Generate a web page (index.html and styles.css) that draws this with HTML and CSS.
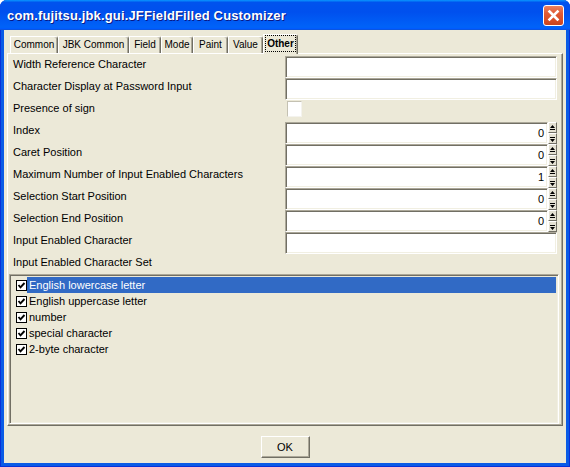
FILE: index.html
```html
<!DOCTYPE html>
<html>
<head>
<meta charset="utf-8">
<link rel="stylesheet" href="styles.css">
</head>
<body>
<div class="window">
  <div class="titlebar">
    <span class="title">com.fujitsu.jbk.gui.JFFieldFilled Customizer</span>
    <div class="close">
      <svg width="19" height="19" viewBox="0 0 19 19"><path d="M5.5 5.5 L13.5 13.5 M13.5 5.5 L5.5 13.5" stroke="#fff" stroke-width="2.6" stroke-linecap="square"/></svg>
    </div>
  </div>
  <div class="client">
    <div class="tabs">
      <div class="tab">Common</div>
      <div class="tab">JBK Common</div>
      <div class="tab">Field</div>
      <div class="tab">Mode</div>
      <div class="tab">Paint</div>
      <div class="tab">Value</div>
      <div class="tab active"><span class="focus">Other</span></div>
    </div>
    <div class="panel">
      <div class="form">
        <span class="label">Width Reference Character</span>
        <div class="field"></div>
        <span class="label">Character Display at Password Input</span>
        <div class="field"></div>
        <span class="label">Presence of sign</span>
        <div class="cell"><span class="check"></span></div>
        <span class="label">Index</span>
        <div class="spinfield"><div class="field num">0</div><div class="spinner"><span class="spin-btn"><svg width="5" height="6" viewBox="0 0 5 6"><path d="M2.5 0 L5 3 L0 3 Z M0 4 H5 V5 H0 Z" fill="#000"/></svg></span><span class="spin-btn"><svg width="5" height="6" viewBox="0 0 5 6"><path d="M0 1 H5 V2 H0 Z M0 3 L5 3 L2.5 6 Z" fill="#000"/></svg></span></div></div>
        <span class="label">Caret Position</span>
        <div class="spinfield"><div class="field num">0</div><div class="spinner"><span class="spin-btn"><svg width="5" height="6" viewBox="0 0 5 6"><path d="M2.5 0 L5 3 L0 3 Z M0 4 H5 V5 H0 Z" fill="#000"/></svg></span><span class="spin-btn"><svg width="5" height="6" viewBox="0 0 5 6"><path d="M0 1 H5 V2 H0 Z M0 3 L5 3 L2.5 6 Z" fill="#000"/></svg></span></div></div>
        <span class="label">Maximum Number of Input Enabled Characters</span>
        <div class="spinfield"><div class="field num">1</div><div class="spinner"><span class="spin-btn"><svg width="5" height="6" viewBox="0 0 5 6"><path d="M2.5 0 L5 3 L0 3 Z M0 4 H5 V5 H0 Z" fill="#000"/></svg></span><span class="spin-btn"><svg width="5" height="6" viewBox="0 0 5 6"><path d="M0 1 H5 V2 H0 Z M0 3 L5 3 L2.5 6 Z" fill="#000"/></svg></span></div></div>
        <span class="label">Selection Start Position</span>
        <div class="spinfield"><div class="field num">0</div><div class="spinner"><span class="spin-btn"><svg width="5" height="6" viewBox="0 0 5 6"><path d="M2.5 0 L5 3 L0 3 Z M0 4 H5 V5 H0 Z" fill="#000"/></svg></span><span class="spin-btn"><svg width="5" height="6" viewBox="0 0 5 6"><path d="M0 1 H5 V2 H0 Z M0 3 L5 3 L2.5 6 Z" fill="#000"/></svg></span></div></div>
        <span class="label">Selection End Position</span>
        <div class="spinfield"><div class="field num">0</div><div class="spinner"><span class="spin-btn"><svg width="5" height="6" viewBox="0 0 5 6"><path d="M2.5 0 L5 3 L0 3 Z M0 4 H5 V5 H0 Z" fill="#000"/></svg></span><span class="spin-btn"><svg width="5" height="6" viewBox="0 0 5 6"><path d="M0 1 H5 V2 H0 Z M0 3 L5 3 L2.5 6 Z" fill="#000"/></svg></span></div></div>
        <span class="label">Input Enabled Character</span>
        <div class="field"></div>
        <span class="label wide">Input Enabled Character Set</span>
      </div>
      <div class="list">
        <div class="item selected"><svg class="cb" width="11" height="11" viewBox="0 0 11 11"><rect x="0.5" y="0.5" width="10" height="10" fill="#fff" stroke="#000"/><polyline points="2.5,5 4.5,7.3 8.5,3" fill="none" stroke="#000" stroke-width="1.9"/></svg><span class="text">English lowercase letter</span></div>
        <div class="item"><svg class="cb" width="11" height="11" viewBox="0 0 11 11"><rect x="0.5" y="0.5" width="10" height="10" fill="#fff" stroke="#000"/><polyline points="2.5,5 4.5,7.3 8.5,3" fill="none" stroke="#000" stroke-width="1.9"/></svg><span class="text">English uppercase letter</span></div>
        <div class="item"><svg class="cb" width="11" height="11" viewBox="0 0 11 11"><rect x="0.5" y="0.5" width="10" height="10" fill="#fff" stroke="#000"/><polyline points="2.5,5 4.5,7.3 8.5,3" fill="none" stroke="#000" stroke-width="1.9"/></svg><span class="text">number</span></div>
        <div class="item"><svg class="cb" width="11" height="11" viewBox="0 0 11 11"><rect x="0.5" y="0.5" width="10" height="10" fill="#fff" stroke="#000"/><polyline points="2.5,5 4.5,7.3 8.5,3" fill="none" stroke="#000" stroke-width="1.9"/></svg><span class="text">special character</span></div>
        <div class="item"><svg class="cb" width="11" height="11" viewBox="0 0 11 11"><rect x="0.5" y="0.5" width="10" height="10" fill="#fff" stroke="#000"/><polyline points="2.5,5 4.5,7.3 8.5,3" fill="none" stroke="#000" stroke-width="1.9"/></svg><span class="text">2-byte character</span></div>
      </div>
    </div>
    <div class="actions">
      <button class="ok">OK</button>
    </div>
  </div>
</div>
</body>
</html>
```

FILE: styles.css
```css
* { box-sizing: border-box; }
html, body { margin: 0; padding: 0; }
body {
  width: 570px;
  height: 467px;
  overflow: hidden;
  background: #ffffff;
  font-family: "Liberation Sans", Arial, sans-serif;
  font-size: 11px;
  color: #000;
}
.window {
  width: 570px;
  height: 467px;
  display: flex;
  flex-direction: column;
  background: #0a5be6;
  box-shadow: inset 1px 0 #0831d9, inset -1px 0 #0831d9, inset 0 -1px #0831d9;
  border-radius: 7px 7px 0 0;
  overflow: hidden;
}
.titlebar {
  height: 30px;
  flex: none;
  display: flex;
  justify-content: space-between;
  align-items: flex-start;
  padding: 0 6px 0 7px;
  background: linear-gradient(180deg, #0997ff, #0053ee 8%, #0050ee 40%, #0062f8 88%, #0062f8 93%, #005bff 95%, #0a55e0 96%, #0a55e0);
}
.title {
  margin-top: 8px;
  color: #fff;
  font-weight: bold;
  font-size: 13px;
  letter-spacing: 0.15px;
  line-height: 16px;
  text-shadow: 1px 1px #0a1883;
  white-space: nowrap;
}
.close {
  margin-top: 5px;
  width: 21px;
  height: 21px;
  border: 1px solid #fff;
  border-radius: 3px;
  background: linear-gradient(180deg, #ec8260 0%, #e05a34 40%, #d84e26 75%, #c8441e 100%);
  display: flex;
  align-items: center;
  justify-content: center;
}
.client {
  flex: 1;
  margin: 0 4px 4px;
  background: #ece9d8;
  display: flex;
  flex-direction: column;
  padding: 4px 3px 0;
}
.tabs {
  display: grid;
  grid-template-columns: 48px 71px 32px 32px 35px 35px 35px;
  align-items: end;
  height: 19px;
  margin-left: 3px;
}
.tab {
  height: 17px;
  line-height: 15px;
  font-size: 10px;
  text-align: center;
  white-space: nowrap;
  border: 1px solid;
  border-color: #fff #716f64 transparent #fff;
  border-bottom: none;
  border-radius: 0 3px 0 0;
  box-shadow: inset -1px 0 #aca899;
  background: #ece9d8;
}
.tab.active {
  height: 20px;
  margin-bottom: -1px;
  position: relative;
  z-index: 1;
  font-weight: bold;
  padding-top: 1px;
}
.focus {
  display: inline-block;
  padding: 0 1px;
  line-height: 15px;
  outline: 1px dotted #000;
  outline-offset: 0;
}
.panel {
  height: 373px;
  flex: none;
  display: flex;
  flex-direction: column;
  border: 1px solid;
  border-color: #fff #716f64 #716f64 #fff;
  box-shadow: inset -1px -1px #aca899;
}
.form {
  display: grid;
  grid-template-columns: 272px 272px;
  grid-template-rows: repeat(9, 22px) 20px;
  padding: 2px 5px 0 5px;
}
.label {
  line-height: 14px;
  padding-top: 1px;
  align-self: start;
  white-space: nowrap;
}
.label.wide { grid-column: 1 / span 2; }
.field {
  height: 22px;
  background: #fff;
  border: 1px solid;
  border-color: #aca899 #fff #fff #aca899;
  box-shadow: inset 1px 1px #716f64, inset -1px -1px #f1efe2;
}
.field.num {
  flex: 1;
  text-align: right;
  padding-right: 3px;
  line-height: 21px;
  font-size: 11px;
}
.cell { padding: 1px 0 0 2px; }
.check {
  display: block;
  width: 15px;
  height: 16px;
  background: #fff;
  border: 1px solid;
  border-color: #c4c1b2 #f4f3ee #f4f3ee #c4c1b2;
}
.spinfield {
  display: flex;
  height: 22px;
}
.spinner {
  width: 9px;
  display: flex;
  flex-direction: column;
}
.spin-btn {
  height: 11px;
  display: flex;
  align-items: center;
  justify-content: center;
  background: #e4e1d3;
  border: 1px solid;
  border-color: #fff #716f64 #716f64 #fff;
}
.spin-btn svg { display: block; }
.list {
  flex: 1;
  margin: 0 3px 1px 1px;
  padding: 2px 2px 0 0;
  border: 1px solid;
  border-color: #aca899 #fff #fff #aca899;
  box-shadow: inset 1px 1px #716f64, inset -1px -1px #f1efe2;
}
.item {
  height: 16px;
  display: flex;
  align-items: center;
}
.cb {
  flex: none;
  margin-left: 6px;
  display: block;
}
.item .text {
  flex: 1;
  height: 16px;
  line-height: 16px;
  padding-left: 2px;
  white-space: nowrap;
}
.item.selected .text {
  background: #316ac5;
  color: #fff;
}
.actions {
  flex: 1;
  display: flex;
  justify-content: center;
  align-items: flex-start;
  padding-top: 10px;
}
.ok {
  width: 49px;
  height: 22px;
  margin: 0;
  padding: 0;
  font-family: "Liberation Sans", Arial, sans-serif;
  font-size: 11px;
  color: #000;
  background: #ece9d8;
  border: 1px solid;
  border-color: #fff #716f64 #716f64 #fff;
  box-shadow: inset -1px -1px #aca899;
}
```
